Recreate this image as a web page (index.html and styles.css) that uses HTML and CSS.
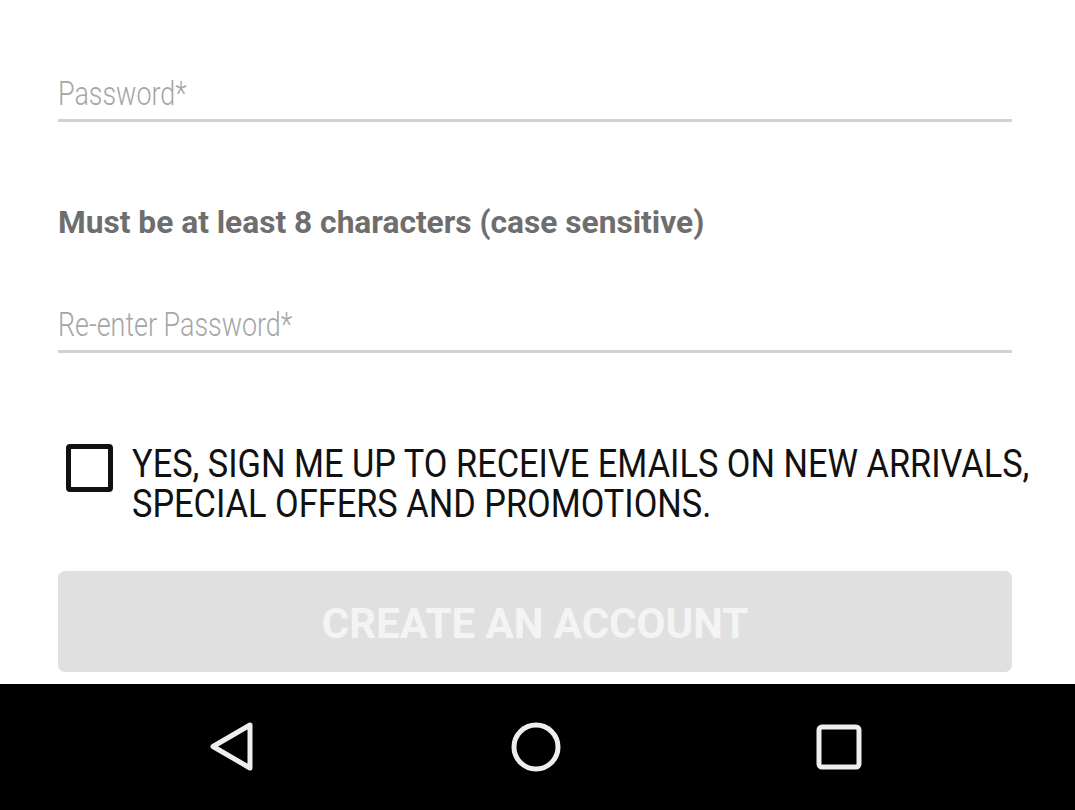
FILE: index.html
```html
<!DOCTYPE html>
<html>
<head>
<meta charset="utf-8">
<link rel="stylesheet" href="styles.css">
</head>
<body>
<div class="screen">
  <main class="form">
    <div class="field field-first">
      <span class="placeholder">Password*</span>
    </div>
    <p class="hint">Must be at least 8 characters (case sensitive)</p>
    <div class="field field-second">
      <span class="placeholder">Re-enter Password*</span>
    </div>
    <label class="optin">
      <span class="box"></span>
      <span class="optin-text">YES, SIGN ME UP TO RECEIVE EMAILS ON NEW ARRIVALS, SPECIAL OFFERS AND PROMOTIONS.</span>
    </label>
    <div class="button">CREATE AN ACCOUNT</div>
  </main>
  <nav class="navbar">
    <svg class="nav-icon" width="60" height="60" viewBox="0 0 60 60"><path d="M47 8 L47 51 L10 29.5 Z" fill="none" stroke="#eee" stroke-width="5" stroke-linejoin="round"/></svg>
    <svg class="nav-icon" width="60" height="60" viewBox="0 0 60 60"><circle cx="30" cy="30" r="22" fill="none" stroke="#eee" stroke-width="5"/></svg>
    <svg class="nav-icon" width="60" height="60" viewBox="0 0 60 60"><rect x="10" y="10" width="40" height="40" rx="3" fill="none" stroke="#eee" stroke-width="5"/></svg>
  </nav>
</div>
</body>
</html>
```
FILE: styles.css
```css
html, body {
  margin: 0;
  padding: 0;
  background: #fff;
  overflow: hidden;
}
.screen {
  width: 1075px;
  height: 810px;
  display: flex;
  flex-direction: column;
  font-family: Roboto, "Liberation Sans", sans-serif;
}
.form {
  flex: none;
  height: 684px;
  padding: 0 63px 0 58px;
  display: flex;
  flex-direction: column;
}
.field {
  flex: none;
  border-bottom: 3px solid #d2d2d2;
  height: 50px;
  display: flex;
  align-items: flex-end;
  padding-bottom: 9px;
  box-sizing: border-box;
}
.field-first { margin-top: 72px; }
.field-second { margin-top: 62px; }
.placeholder {
  display: inline-block;
  font-size: 33px;
  font-weight: 300;
  color: #a6a6a6;
  line-height: 33px;
  white-space: nowrap;
  transform: scaleX(0.815);
  transform-origin: left center;
}
.hint {
  margin: 83px 0 0;
  font-size: 31.7px;
  font-weight: 700;
  color: #6e6e6e;
  line-height: 36px;
}
.optin {
  display: flex;
  align-items: flex-start;
  margin-top: 91px;
}
.box {
  flex: none;
  box-sizing: border-box;
  width: 47px;
  height: 48px;
  border: 5px solid #111;
  border-radius: 4px;
  margin: 0 19px 0 8px;
}
.optin-text {
  flex: none;
  display: block;
  width: 1030px;
  font-size: 38px;
  color: #111;
  line-height: 40px;
  transform: scaleX(0.904);
  transform-origin: left top;
}
.button {
  flex: none;
  margin-top: 47px;
  height: 101px;
  box-sizing: border-box;
  padding-top: 3px;
  background: #e0e0e0;
  border-radius: 7px;
  display: flex;
  align-items: center;
  justify-content: center;
  font-size: 42px;
  font-weight: 700;
  color: #f4f4f4;
}
.navbar {
  flex: none;
  height: 126px;
  background: #000;
  display: flex;
  align-items: center;
  justify-content: space-between;
  padding: 0 206px 0 203px;
}
```
